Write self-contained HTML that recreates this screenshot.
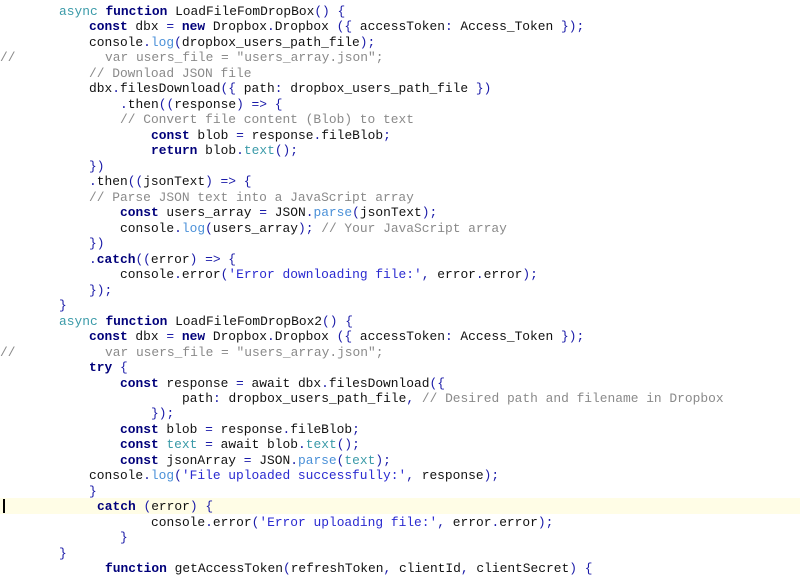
<!DOCTYPE html>
<html><head><style>
body{margin:0;width:800px;height:566px;overflow:hidden;background:#fff;position:relative;font-family:"Liberation Mono",monospace;font-size:12.9px;color:#111}
.l{position:absolute;white-space:pre;line-height:15px;height:15px}
.k{color:#00007a;font-weight:bold}
.p{color:#1a1aa8}
.a{color:#3a9aa8}
.m{color:#4a90d8}
.s{color:#2a2ad0}
.c{color:#8a8a8a}
.hl{position:absolute;left:0;top:498px;width:800px;height:16px;background:#fffde6}
.cur{position:absolute;left:3px;top:499px;width:2px;height:14px;background:#000}
</style></head><body>
<div class="hl"></div><div class="cur"></div>
<div class="l" style="left:59px;top:4px"><span class="a">async</span> <span class="k">function</span> LoadFileFomDropBox<span class="p">() {</span></div>
<div class="l" style="left:89px;top:19px"><span class="k">const</span> dbx <span class="p">=</span> <span class="k">new</span> Dropbox<span class="p">.</span>Dropbox <span class="p">({</span> accessToken<span class="p">:</span> Access_Token <span class="p">});</span></div>
<div class="l" style="left:89px;top:35px">console<span class="p">.</span><span class="m">log</span><span class="p">(</span>dropbox_users_path_file<span class="p">);</span></div>
<div class="l c" style="left:0;top:50px">//</div>
<div class="l c" style="left:105px;top:50px">var users_file = "users_array.json";</div>
<div class="l c" style="left:89px;top:66px">// Download JSON file</div>
<div class="l" style="left:89px;top:81px">dbx<span class="p">.</span>filesDownload<span class="p">({</span> path<span class="p">:</span> dropbox_users_path_file <span class="p">})</span></div>
<div class="l" style="left:120px;top:97px"><span class="p">.</span>then<span class="p">((</span>response<span class="p">) =&gt; {</span></div>
<div class="l c" style="left:120px;top:112px">// Convert file content (Blob) to text</div>
<div class="l" style="left:151px;top:128px"><span class="k">const</span> blob <span class="p">=</span> response<span class="p">.</span>fileBlob<span class="p">;</span></div>
<div class="l" style="left:151px;top:143px"><span class="k">return</span> blob<span class="p">.</span><span class="a">text</span><span class="p">();</span></div>
<div class="l p" style="left:89px;top:159px">})</div>
<div class="l" style="left:89px;top:174px"><span class="p">.</span>then<span class="p">((</span>jsonText<span class="p">) =&gt; {</span></div>
<div class="l c" style="left:89px;top:190px">// Parse JSON text into a JavaScript array</div>
<div class="l" style="left:120px;top:205px"><span class="k">const</span> users_array <span class="p">=</span> JSON<span class="p">.</span><span class="m">parse</span><span class="p">(</span>jsonText<span class="p">);</span></div>
<div class="l" style="left:120px;top:221px">console<span class="p">.</span><span class="m">log</span><span class="p">(</span>users_array<span class="p">);</span> <span class="c">// Your JavaScript array</span></div>
<div class="l p" style="left:89px;top:236px">})</div>
<div class="l" style="left:89px;top:252px"><span class="p">.</span><span class="k">catch</span><span class="p">((</span>error<span class="p">) =&gt; {</span></div>
<div class="l" style="left:120px;top:267px">console<span class="p">.</span>error<span class="p">(</span><span class="s">'Error downloading file:'</span><span class="p">,</span> error<span class="p">.</span>error<span class="p">);</span></div>
<div class="l p" style="left:89px;top:283px">});</div>
<div class="l p" style="left:59px;top:298px">}</div>
<div class="l" style="left:59px;top:314px"><span class="a">async</span> <span class="k">function</span> LoadFileFomDropBox2<span class="p">() {</span></div>
<div class="l" style="left:89px;top:329px"><span class="k">const</span> dbx <span class="p">=</span> <span class="k">new</span> Dropbox<span class="p">.</span>Dropbox <span class="p">({</span> accessToken<span class="p">:</span> Access_Token <span class="p">});</span></div>
<div class="l c" style="left:0;top:345px">//</div>
<div class="l c" style="left:105px;top:345px">var users_file = "users_array.json";</div>
<div class="l" style="left:89px;top:360px"><span class="k">try</span> <span class="p">{</span></div>
<div class="l" style="left:120px;top:376px"><span class="k">const</span> response <span class="p">=</span> await dbx<span class="p">.</span>filesDownload<span class="p">({</span></div>
<div class="l" style="left:182px;top:391px">path<span class="p">:</span> dropbox_users_path_file<span class="p">,</span> <span class="c">// Desired path and filename in Dropbox</span></div>
<div class="l p" style="left:151px;top:406px">});</div>
<div class="l" style="left:120px;top:422px"><span class="k">const</span> blob <span class="p">=</span> response<span class="p">.</span>fileBlob<span class="p">;</span></div>
<div class="l" style="left:120px;top:437px"><span class="k">const</span> <span class="a">text</span> <span class="p">=</span> await blob<span class="p">.</span><span class="a">text</span><span class="p">();</span></div>
<div class="l" style="left:120px;top:453px"><span class="k">const</span> jsonArray <span class="p">=</span> JSON<span class="p">.</span><span class="m">parse</span><span class="p">(</span><span class="a">text</span><span class="p">);</span></div>
<div class="l" style="left:89px;top:468px">console<span class="p">.</span><span class="m">log</span><span class="p">(</span><span class="s">'File uploaded successfully:'</span><span class="p">,</span> response<span class="p">);</span></div>
<div class="l p" style="left:89px;top:484px">}</div>
<div class="l" style="left:97px;top:499px"><span class="k">catch</span> <span class="p">(</span>error<span class="p">) {</span></div>
<div class="l" style="left:151px;top:515px">console<span class="p">.</span>error<span class="p">(</span><span class="s">'Error uploading file:'</span><span class="p">,</span> error<span class="p">.</span>error<span class="p">);</span></div>
<div class="l p" style="left:120px;top:530px">}</div>
<div class="l p" style="left:59px;top:546px">}</div>
<div class="l" style="left:105px;top:561px"><span class="k">function</span> getAccessToken<span class="p">(</span>refreshToken<span class="p">,</span> clientId<span class="p">,</span> clientSecret<span class="p">) {</span></div>
</body></html>
